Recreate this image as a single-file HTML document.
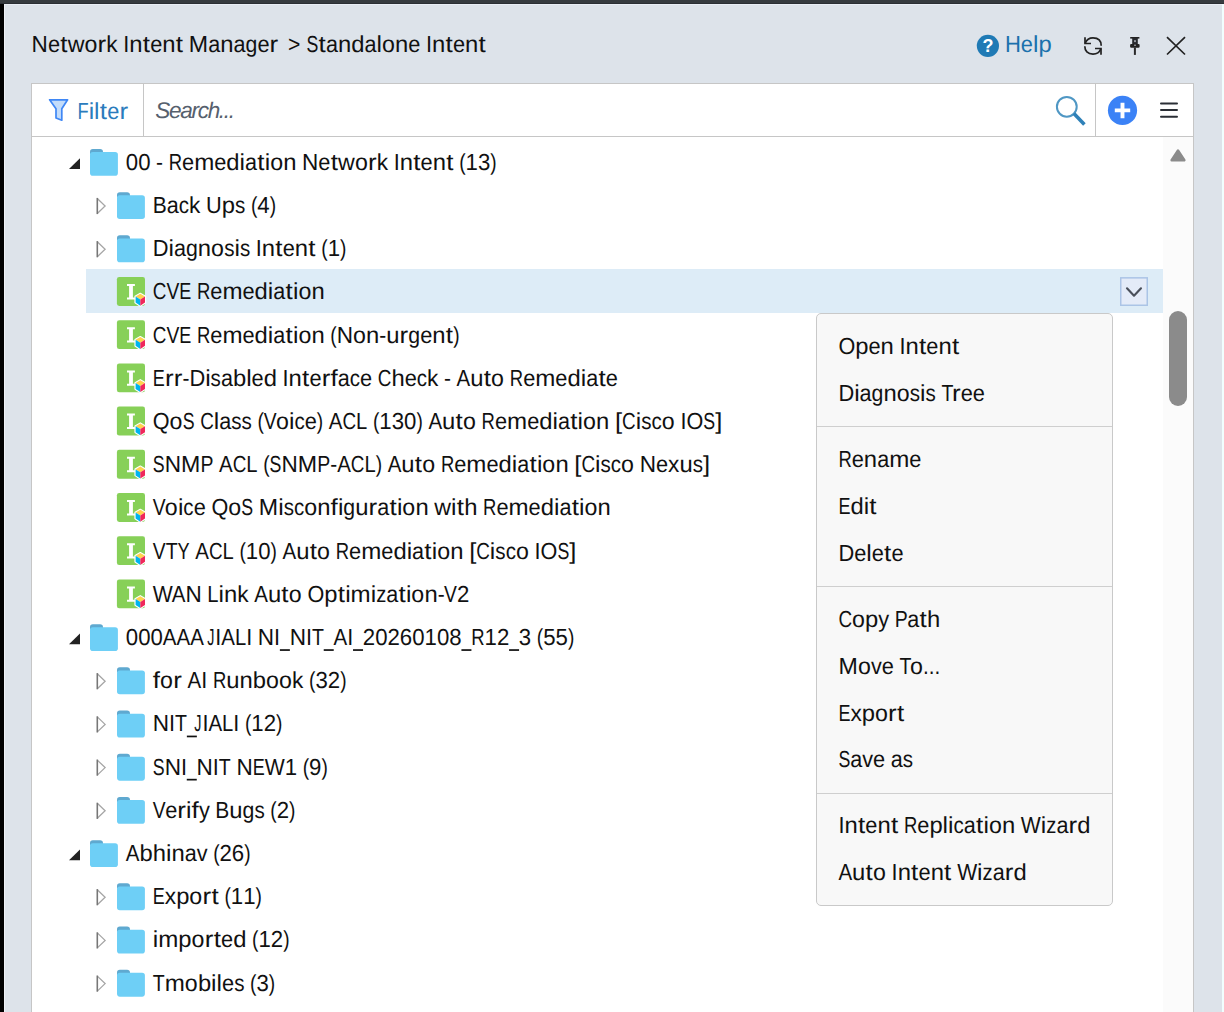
<!DOCTYPE html>
<html><head><meta charset="utf-8"><title>Network Intent Manager</title>
<style>
html,body{margin:0;padding:0;}
body{width:1224px;height:1012px;overflow:hidden;position:relative;background:#dde3ea;font-family:"Liberation Sans",sans-serif;font-size:22px;color:#111;}
.abs{position:absolute;}
.g{color:transparent;font-size:22px !important;}
.t{position:absolute;white-space:pre;line-height:43.2px;height:43.2px;font-size:22.6px;text-rendering:geometricPrecision;}
svg{position:absolute;overflow:visible;}
</style></head><body>

<div class="abs" style="left:0;top:0;width:1224px;height:3px;background:#363b3f"></div>
<div class="abs" style="left:0;top:3px;width:1224px;height:1px;background:#2b2f34"></div>
<div class="abs" style="left:4px;top:4px;width:1220px;height:1px;background:#e9eef5"></div>
<div class="abs" style="left:1222px;top:4px;width:2px;height:1008px;background:#f1fefe"></div>
<div class="abs" style="left:0;top:4px;width:4px;height:1008px;background:#000"></div>
<div class="abs" style="left:4px;top:4px;width:1px;height:1008px;background:#eef1f5"></div>
<svg style="left:976px;top:34px" width="24" height="24" viewBox="0 0 24 24"><circle cx="11.9" cy="11.8" r="11.1" fill="#1f7ab5"/><text x="11.9" y="18.2" text-anchor="middle" font-family="Liberation Sans" font-weight="bold" font-size="18" fill="#fff">?</text></svg>
<svg style="left:1084px;top:37px" width="18" height="18" viewBox="0 0 18 18" fill="none" stroke="#222" stroke-width="1.7"><path d="M1.2 6.3 C2.6 2.6 5.2 0.9 9 0.9 C14.4 0.9 17.2 4 17.2 8.7"/><path d="M16.8 11.7 C15.4 15.4 12.8 17.1 9 17.1 C3.6 17.1 0.8 14 0.8 9.3"/><path d="M1 0.2 V6.5 H7"/><path d="M17 17.8 V11.5 H11"/></svg>
<svg style="left:1130px;top:37px" width="10" height="18" viewBox="0 0 10 18"><rect x="0.2" y="0" width="9.2" height="1.6" fill="#222"/><path d="M2.2 1 H7.8 V8 H2.2 Z" fill="#26282c"/><rect x="4.2" y="3" width="1.6" height="2.2" rx="0.8" fill="#b9bec5"/><rect x="0.1" y="6.9" width="9.5" height="3.9" rx="1.2" fill="#222"/><rect x="4" y="7.6" width="2" height="1.4" rx="0.7" fill="#9a9fa6"/><rect x="3.9" y="10.5" width="2" height="7.4" fill="#2a2a2a"/></svg>
<svg style="left:1166px;top:36px" width="20" height="20" viewBox="0 0 20 20" fill="none" stroke="#222" stroke-width="1.7"><path d="M1 1.2 L19 18.5 M19 1.2 L1 18.5"/></svg>
<div class="abs" style="left:31px;top:83px;width:1161px;height:940px;background:#fff;border:1px solid #c6c6c6"></div>
<div class="abs" style="left:32px;top:136px;width:1161px;height:1px;background:#c6c6c6"></div>
<div class="abs" style="left:143px;top:84px;width:1px;height:52px;background:#c6c6c6"></div>
<div class="abs" style="left:1095px;top:84px;width:1px;height:52px;background:#c6c6c6"></div>
<svg style="left:48px;top:98px" width="22" height="24" viewBox="0 0 22 24"><path d="M1.6 1.8 H19.6 L13.8 10.8 V22.2 L8 20 V10.8 Z" fill="#c3dcfa" stroke="#3f87f5" stroke-width="1.7" stroke-linejoin="round"/></svg>
<div class="t" style="left:155.30px;top:89.00px;letter-spacing:-1.338px;color:#56606d;font-style:italic">Search...</div>
<svg style="left:1054px;top:94px" width="34" height="34" viewBox="0 0 34 34" fill="none"><circle cx="12.8" cy="12.8" r="9.9" stroke="#4f97c4" stroke-width="2"/><path d="M19.9 19.6 L30.4 30.4" stroke="#2f81b8" stroke-width="3.6" stroke-linecap="butt"/></svg>
<svg style="left:1107px;top:95px" width="32" height="32" viewBox="0 0 32 32"><circle cx="15.5" cy="15.4" r="14.6" fill="#3b82f6"/><path d="M7.8 15.4 H23.2 M15.5 7.8 V23.2" stroke="#fff" stroke-width="3.9"/></svg>
<svg style="left:1160px;top:100px" width="18" height="20" viewBox="0 0 18 20" stroke="#2b2f36" stroke-width="2" stroke-linecap="round"><path d="M1 3.5 H17 M1 10.1 H17 M1 16.7 H17"/></svg>
<div class="abs" style="left:1163px;top:137px;width:30px;height:880px;background:#fbfbfb"></div>
<svg style="left:1168px;top:147px" width="20" height="16" viewBox="0 0 20 16"><path d="M3.6 13.2 L10 3.4 L16.4 13.2 Z" fill="#8b8b8b" stroke="#8b8b8b" stroke-width="2.4" stroke-linejoin="round"/></svg>
<div class="abs" style="left:1169px;top:311px;width:18px;height:95px;border-radius:9px;background:#8b8b8b"></div>
<div class="abs" style="left:86px;top:269.15px;width:1077px;height:43.55px;background:#ddecf7"></div>
<svg style="left:1120px;top:277px" width="28" height="29" viewBox="0 0 28 29"><rect x="0.75" y="0.85" width="26.5" height="27.4" fill="#e4ebf8" stroke="#abc4e6" stroke-width="1.5"/></svg>
<svg style="left:1120px;top:277px" width="28" height="29" viewBox="0 0 28 29" fill="none" stroke="#4a4f5a" stroke-width="2.1" stroke-linecap="round" stroke-linejoin="round"><path d="M7 11.3 L14 18.7 L21 11.3"/></svg>
<svg style="left:0;top:0" width="1224" height="1012" viewBox="0 0 1224 1012"><defs><g id="fo"><path d="M0.1 6.5 V4 Q0.1 1.3 2.9 1.3 H10.2 Q13 1.3 13.1 4 V6.5 Z" fill="#5fa9d0"/><path d="M0.1 7.2 Q0.1 4.4 2.9 4.4 H25.2 Q28 4.4 28 7.2 V25.4 Q28 28.2 25.2 28.2 H2.9 Q0.1 28.2 0.1 25.4 Z" fill="#6ecff6"/></g><g id="in"><rect x="0" y="0" width="28.1" height="28.9" rx="2.3" fill="#87d058"/><path d="M10.1 7 H18 V9 H16 V20.4 H18 V22.4 H10.1 V20.4 H12.2 V9 H10.1 Z" fill="#fff"/><path d="M23.4 16.4 L28.6 19.4 V25.7 L23.4 29.1 L18.2 25.7 V19.4 Z" fill="#fff" stroke="#fff" stroke-width="1.4" stroke-linejoin="round"/><path d="M23.4 16.8 L28.1 19.6 L23.4 22.5 L18.7 19.6 Z" fill="#ffd34f"/><path d="M18.7 19.6 L23.4 22.5 V28.7 L18.7 25.6 Z" fill="#00b4ef"/><path d="M28.1 19.6 L23.4 22.5 V28.7 L28.1 25.6 Z" fill="#f0285a"/></g><path id="op" d="M-9.9 -3 V7.8 H-20.9 Z" fill="#222"/><g id="cl" fill="none"><path d="M-19.6 -6 L-11.8 1.5 L-19.6 9" stroke="#a6a6a6" stroke-width="1.3"/><path d="M-19.6 -6.6 V9.6" stroke="#777" stroke-width="1.6"/></g></defs>
<use href="#fo" x="89.90" y="147.65"/>
<use href="#op" x="89.90" y="161.30"/>
<use href="#fo" x="116.90" y="190.85"/>
<use href="#cl" x="116.90" y="204.50"/>
<use href="#fo" x="116.90" y="234.05"/>
<use href="#cl" x="116.90" y="247.70"/>
<use href="#in" x="116.90" y="277.00"/>
<use href="#in" x="116.90" y="320.20"/>
<use href="#in" x="116.90" y="363.40"/>
<use href="#in" x="116.90" y="406.60"/>
<use href="#in" x="116.90" y="449.80"/>
<use href="#in" x="116.90" y="493.00"/>
<use href="#in" x="116.90" y="536.20"/>
<use href="#in" x="116.90" y="579.40"/>
<use href="#fo" x="89.90" y="622.85"/>
<use href="#op" x="89.90" y="636.50"/>
<use href="#fo" x="116.90" y="666.05"/>
<use href="#cl" x="116.90" y="679.70"/>
<use href="#fo" x="116.90" y="709.25"/>
<use href="#cl" x="116.90" y="722.90"/>
<use href="#fo" x="116.90" y="752.45"/>
<use href="#cl" x="116.90" y="766.10"/>
<use href="#fo" x="116.90" y="795.65"/>
<use href="#cl" x="116.90" y="809.30"/>
<use href="#fo" x="89.90" y="838.85"/>
<use href="#op" x="89.90" y="852.50"/>
<use href="#fo" x="116.90" y="882.05"/>
<use href="#cl" x="116.90" y="895.70"/>
<use href="#fo" x="116.90" y="925.25"/>
<use href="#cl" x="116.90" y="938.90"/>
<use href="#fo" x="116.90" y="968.45"/>
<use href="#cl" x="116.90" y="982.10"/>
</svg>
<div class="abs" style="left:816.2px;top:312.7px;width:294.6px;height:591.8px;background:#f8f8f8;border:1px solid #c9c9c9;border-radius:5px"></div>
<div class="abs" style="left:817px;top:426px;width:295px;height:1px;background:#cfcfcf"></div>
<div class="abs" style="left:817px;top:586px;width:295px;height:1px;background:#cfcfcf"></div>
<div class="abs" style="left:817px;top:793px;width:295px;height:1px;background:#cfcfcf"></div>
<svg style="left:0;top:0" width="1224" height="1012" viewBox="0 0 1224 1012" font-family="Liberation Sans, sans-serif" font-size="23.2" text-rendering="geometricPrecision" style="white-space:pre">
<g fill="#111"><text transform="matrix(0.972 0 0 1 31.60 52.00)">N</text><text transform="matrix(0.939 0 0 1 47.88 52.00)">e</text><text transform="matrix(1.120 0 0 1 60.21 52.00)">t</text><text x="67.63" y="52.00">w</text><text x="84.43" y="52.00">o</text><text transform="matrix(1.120 0 0 1 97.56 52.00)">r</text><text transform="matrix(0.977 0 0 1 106.29 52.00)">k</text><text transform="matrix(0.934 0 0 1 123.24 52.00)">I</text><text transform="matrix(1.027 0 0 1 129.26 52.00)">n</text><text transform="matrix(1.120 0 0 1 142.72 52.00)">t</text><text transform="matrix(0.939 0 0 1 150.15 52.00)">e</text><text transform="matrix(1.027 0 0 1 162.27 52.00)">n</text><text transform="matrix(1.120 0 0 1 175.73 52.00)">t</text><text x="188.76" y="52.00">M</text><text transform="matrix(0.931 0 0 1 208.26 52.00)">a</text><text transform="matrix(1.027 0 0 1 220.27 52.00)">n</text><text transform="matrix(0.931 0 0 1 233.53 52.00)">a</text><text transform="matrix(0.917 0 0 1 245.54 52.00)">g</text><text transform="matrix(0.939 0 0 1 257.38 52.00)">e</text><text transform="matrix(1.120 0 0 1 269.58 52.00)">r</text></g>
<g fill="#111"><text transform="matrix(0.912 0 0 1 288.00 52.00)">&gt;</text></g>
<g fill="#111"><text transform="matrix(0.766 0 0 1 306.50 52.00)">S</text><text transform="matrix(1.120 0 0 1 318.56 52.00)">t</text><text transform="matrix(0.931 0 0 1 325.98 52.00)">a</text><text transform="matrix(1.027 0 0 1 337.99 52.00)">n</text><text transform="matrix(1.026 0 0 1 351.25 52.00)">d</text><text transform="matrix(0.931 0 0 1 364.49 52.00)">a</text><text transform="matrix(1.060 0 0 1 376.50 52.00)">l</text><text x="381.96" y="52.00">o</text><text transform="matrix(1.027 0 0 1 395.01 52.00)">n</text><text transform="matrix(0.939 0 0 1 408.27 52.00)">e</text><text transform="matrix(0.934 0 0 1 426.00 52.00)">I</text><text transform="matrix(1.027 0 0 1 432.02 52.00)">n</text><text transform="matrix(1.120 0 0 1 445.48 52.00)">t</text><text transform="matrix(0.939 0 0 1 452.90 52.00)">e</text><text transform="matrix(1.027 0 0 1 465.02 52.00)">n</text><text transform="matrix(1.120 0 0 1 478.48 52.00)">t</text></g>
<g fill="#1b71ad"><text transform="matrix(0.951 0 0 1 1004.90 51.70)">H</text><text transform="matrix(0.939 0 0 1 1020.84 51.70)">e</text><text transform="matrix(1.060 0 0 1 1032.95 51.70)">l</text><text transform="matrix(1.026 0 0 1 1038.42 51.70)">p</text></g>
<g fill="#2b7cbd"><text transform="matrix(0.787 0 0 1 77.50 118.50)">F</text><text transform="matrix(1.060 0 0 1 88.65 118.50)">i</text><text transform="matrix(1.060 0 0 1 94.11 118.50)">l</text><text transform="matrix(1.120 0 0 1 99.78 118.50)">t</text><text transform="matrix(0.939 0 0 1 107.20 118.50)">e</text><text transform="matrix(1.120 0 0 1 119.40 118.50)">r</text></g>
<g fill="#111"><text transform="matrix(0.957 0 0 1 125.80 169.80)">0</text><text transform="matrix(0.957 0 0 1 138.15 169.80)">0</text><text transform="matrix(0.900 0 0 1 156.11 169.80)">-</text><text transform="matrix(0.797 0 0 1 168.67 169.80)">R</text><text transform="matrix(0.939 0 0 1 182.03 169.80)">e</text><text transform="matrix(1.040 0 0 1 194.14 169.80)">m</text><text transform="matrix(0.939 0 0 1 214.24 169.80)">e</text><text transform="matrix(1.026 0 0 1 226.35 169.80)">d</text><text transform="matrix(1.060 0 0 1 239.59 169.80)">i</text><text transform="matrix(0.931 0 0 1 245.05 169.80)">a</text><text transform="matrix(1.120 0 0 1 257.27 169.80)">t</text><text transform="matrix(1.060 0 0 1 264.69 169.80)">i</text><text x="270.16" y="169.80">o</text><text transform="matrix(1.027 0 0 1 283.20 169.80)">n</text><text transform="matrix(0.972 0 0 1 302.07 169.80)">N</text><text transform="matrix(0.939 0 0 1 318.35 169.80)">e</text><text transform="matrix(1.120 0 0 1 330.68 169.80)">t</text><text x="338.10" y="169.80">w</text><text x="354.90" y="169.80">o</text><text transform="matrix(1.120 0 0 1 368.03 169.80)">r</text><text transform="matrix(0.977 0 0 1 376.76 169.80)">k</text><text transform="matrix(0.934 0 0 1 393.71 169.80)">I</text><text transform="matrix(1.027 0 0 1 399.73 169.80)">n</text><text transform="matrix(1.120 0 0 1 413.19 169.80)">t</text><text transform="matrix(0.939 0 0 1 420.62 169.80)">e</text><text transform="matrix(1.027 0 0 1 432.74 169.80)">n</text><text transform="matrix(1.120 0 0 1 446.20 169.80)">t</text><text transform="matrix(0.827 0 0 1 459.23 169.80)">(</text><text transform="matrix(0.957 0 0 1 465.62 169.80)">1</text><text transform="matrix(0.957 0 0 1 477.97 169.80)">3</text><text transform="matrix(0.827 0 0 1 490.32 169.80)">)</text></g>
<g fill="#111"><text transform="matrix(0.904 0 0 1 152.80 213.00)">B</text><text transform="matrix(0.931 0 0 1 166.80 213.00)">a</text><text transform="matrix(0.886 0 0 1 178.81 213.00)">c</text><text transform="matrix(0.977 0 0 1 189.09 213.00)">k</text><text transform="matrix(0.939 0 0 1 206.04 213.00)">U</text><text transform="matrix(1.026 0 0 1 221.77 213.00)">p</text><text transform="matrix(0.888 0 0 1 235.00 213.00)">s</text><text transform="matrix(0.827 0 0 1 250.92 213.00)">(</text><text transform="matrix(0.957 0 0 1 257.31 213.00)">4</text><text transform="matrix(0.827 0 0 1 269.66 213.00)">)</text></g>
<g fill="#111"><text transform="matrix(0.940 0 0 1 152.80 256.20)">D</text><text transform="matrix(1.060 0 0 1 168.55 256.20)">i</text><text transform="matrix(0.931 0 0 1 174.01 256.20)">a</text><text transform="matrix(0.917 0 0 1 186.02 256.20)">g</text><text transform="matrix(1.027 0 0 1 197.86 256.20)">n</text><text x="211.11" y="256.20">o</text><text transform="matrix(0.888 0 0 1 224.16 256.20)">s</text><text transform="matrix(1.060 0 0 1 234.46 256.20)">i</text><text transform="matrix(0.888 0 0 1 239.93 256.20)">s</text><text transform="matrix(0.934 0 0 1 255.84 256.20)">I</text><text transform="matrix(1.027 0 0 1 261.87 256.20)">n</text><text transform="matrix(1.120 0 0 1 275.33 256.20)">t</text><text transform="matrix(0.939 0 0 1 282.75 256.20)">e</text><text transform="matrix(1.027 0 0 1 294.87 256.20)">n</text><text transform="matrix(1.120 0 0 1 308.33 256.20)">t</text><text transform="matrix(0.827 0 0 1 321.36 256.20)">(</text><text transform="matrix(0.957 0 0 1 327.75 256.20)">1</text><text transform="matrix(0.827 0 0 1 340.10 256.20)">)</text></g>
<g fill="#111"><text transform="matrix(0.813 0 0 1 152.80 299.40)">C</text><text transform="matrix(0.831 0 0 1 166.43 299.40)">V</text><text transform="matrix(0.776 0 0 1 179.28 299.40)">E</text><text transform="matrix(0.797 0 0 1 196.91 299.40)">R</text><text transform="matrix(0.939 0 0 1 210.26 299.40)">e</text><text transform="matrix(1.040 0 0 1 222.38 299.40)">m</text><text transform="matrix(0.939 0 0 1 242.47 299.40)">e</text><text transform="matrix(1.026 0 0 1 254.59 299.40)">d</text><text transform="matrix(1.060 0 0 1 267.82 299.40)">i</text><text transform="matrix(0.931 0 0 1 273.29 299.40)">a</text><text transform="matrix(1.120 0 0 1 285.50 299.40)">t</text><text transform="matrix(1.060 0 0 1 292.93 299.40)">i</text><text x="298.39" y="299.40">o</text><text transform="matrix(1.027 0 0 1 311.44 299.40)">n</text></g>
<g fill="#111"><text transform="matrix(0.813 0 0 1 152.80 342.60)">C</text><text transform="matrix(0.831 0 0 1 166.43 342.60)">V</text><text transform="matrix(0.776 0 0 1 179.28 342.60)">E</text><text transform="matrix(0.797 0 0 1 196.91 342.60)">R</text><text transform="matrix(0.939 0 0 1 210.26 342.60)">e</text><text transform="matrix(1.040 0 0 1 222.38 342.60)">m</text><text transform="matrix(0.939 0 0 1 242.47 342.60)">e</text><text transform="matrix(1.026 0 0 1 254.59 342.60)">d</text><text transform="matrix(1.060 0 0 1 267.82 342.60)">i</text><text transform="matrix(0.931 0 0 1 273.29 342.60)">a</text><text transform="matrix(1.120 0 0 1 285.50 342.60)">t</text><text transform="matrix(1.060 0 0 1 292.93 342.60)">i</text><text x="298.39" y="342.60">o</text><text transform="matrix(1.027 0 0 1 311.44 342.60)">n</text><text transform="matrix(0.827 0 0 1 330.30 342.60)">(</text><text transform="matrix(0.972 0 0 1 336.70 342.60)">N</text><text x="352.98" y="342.60">o</text><text transform="matrix(1.027 0 0 1 366.03 342.60)">n</text><text transform="matrix(0.900 0 0 1 379.28 342.60)">-</text><text transform="matrix(1.027 0 0 1 386.23 342.60)">u</text><text transform="matrix(1.120 0 0 1 399.57 342.60)">r</text><text transform="matrix(0.917 0 0 1 408.31 342.60)">g</text><text transform="matrix(0.939 0 0 1 420.14 342.60)">e</text><text transform="matrix(1.027 0 0 1 432.26 342.60)">n</text><text transform="matrix(1.120 0 0 1 445.72 342.60)">t</text><text transform="matrix(0.827 0 0 1 453.14 342.60)">)</text></g>
<g fill="#111"><text transform="matrix(0.776 0 0 1 152.80 385.80)">E</text><text transform="matrix(1.120 0 0 1 164.90 385.80)">r</text><text transform="matrix(1.120 0 0 1 173.71 385.80)">r</text><text transform="matrix(0.900 0 0 1 182.45 385.80)">-</text><text transform="matrix(0.940 0 0 1 189.40 385.80)">D</text><text transform="matrix(1.060 0 0 1 205.14 385.80)">i</text><text transform="matrix(0.888 0 0 1 210.61 385.80)">s</text><text transform="matrix(0.931 0 0 1 220.91 385.80)">a</text><text transform="matrix(1.026 0 0 1 232.92 385.80)">b</text><text transform="matrix(1.060 0 0 1 246.16 385.80)">l</text><text transform="matrix(0.939 0 0 1 251.62 385.80)">e</text><text transform="matrix(1.026 0 0 1 263.74 385.80)">d</text><text transform="matrix(0.934 0 0 1 282.59 385.80)">I</text><text transform="matrix(1.027 0 0 1 288.61 385.80)">n</text><text transform="matrix(1.120 0 0 1 302.07 385.80)">t</text><text transform="matrix(0.939 0 0 1 309.49 385.80)">e</text><text transform="matrix(1.120 0 0 1 321.70 385.80)">r</text><text transform="matrix(1.120 0 0 1 330.48 385.80)">f</text><text transform="matrix(0.931 0 0 1 337.75 385.80)">a</text><text transform="matrix(0.886 0 0 1 349.76 385.80)">c</text><text transform="matrix(0.939 0 0 1 360.05 385.80)">e</text><text transform="matrix(0.813 0 0 1 377.78 385.80)">C</text><text transform="matrix(1.027 0 0 1 391.40 385.80)">h</text><text transform="matrix(0.939 0 0 1 404.66 385.80)">e</text><text transform="matrix(0.886 0 0 1 416.78 385.80)">c</text><text transform="matrix(0.977 0 0 1 427.06 385.80)">k</text><text transform="matrix(0.900 0 0 1 444.01 385.80)">-</text><text transform="matrix(0.883 0 0 1 456.57 385.80)">A</text><text transform="matrix(1.027 0 0 1 470.24 385.80)">u</text><text transform="matrix(1.120 0 0 1 483.70 385.80)">t</text><text x="491.12" y="385.80">o</text><text transform="matrix(0.797 0 0 1 509.78 385.80)">R</text><text transform="matrix(0.939 0 0 1 523.13 385.80)">e</text><text transform="matrix(1.040 0 0 1 535.25 385.80)">m</text><text transform="matrix(0.939 0 0 1 555.34 385.80)">e</text><text transform="matrix(1.026 0 0 1 567.46 385.80)">d</text><text transform="matrix(1.060 0 0 1 580.70 385.80)">i</text><text transform="matrix(0.931 0 0 1 586.16 385.80)">a</text><text transform="matrix(1.120 0 0 1 598.38 385.80)">t</text><text transform="matrix(0.939 0 0 1 605.80 385.80)">e</text></g>
<g fill="#111"><text transform="matrix(0.932 0 0 1 152.80 429.00)">Q</text><text x="169.62" y="429.00">o</text><text transform="matrix(0.766 0 0 1 182.67 429.00)">S</text><text transform="matrix(0.813 0 0 1 200.13 429.00)">C</text><text transform="matrix(1.060 0 0 1 213.76 429.00)">l</text><text transform="matrix(0.931 0 0 1 219.22 429.00)">a</text><text transform="matrix(0.888 0 0 1 231.24 429.00)">s</text><text transform="matrix(0.888 0 0 1 241.54 429.00)">s</text><text transform="matrix(0.827 0 0 1 257.46 429.00)">(</text><text transform="matrix(0.831 0 0 1 263.85 429.00)">V</text><text x="275.90" y="429.00">o</text><text transform="matrix(1.060 0 0 1 288.95 429.00)">i</text><text transform="matrix(0.886 0 0 1 294.41 429.00)">c</text><text transform="matrix(0.939 0 0 1 304.70 429.00)">e</text><text transform="matrix(0.827 0 0 1 316.82 429.00)">)</text><text transform="matrix(0.883 0 0 1 328.82 429.00)">A</text><text transform="matrix(0.813 0 0 1 342.49 429.00)">C</text><text transform="matrix(0.869 0 0 1 356.11 429.00)">L</text><text transform="matrix(0.827 0 0 1 372.94 429.00)">(</text><text transform="matrix(0.957 0 0 1 379.33 429.00)">1</text><text transform="matrix(0.957 0 0 1 391.68 429.00)">3</text><text transform="matrix(0.957 0 0 1 404.03 429.00)">0</text><text transform="matrix(0.827 0 0 1 416.38 429.00)">)</text><text transform="matrix(0.883 0 0 1 428.38 429.00)">A</text><text transform="matrix(1.027 0 0 1 442.05 429.00)">u</text><text transform="matrix(1.120 0 0 1 455.51 429.00)">t</text><text x="462.93" y="429.00">o</text><text transform="matrix(0.797 0 0 1 481.59 429.00)">R</text><text transform="matrix(0.939 0 0 1 494.94 429.00)">e</text><text transform="matrix(1.040 0 0 1 507.06 429.00)">m</text><text transform="matrix(0.939 0 0 1 527.15 429.00)">e</text><text transform="matrix(1.026 0 0 1 539.27 429.00)">d</text><text transform="matrix(1.060 0 0 1 552.51 429.00)">i</text><text transform="matrix(0.931 0 0 1 557.97 429.00)">a</text><text transform="matrix(1.120 0 0 1 570.19 429.00)">t</text><text transform="matrix(1.060 0 0 1 577.61 429.00)">i</text><text x="583.07" y="429.00">o</text><text transform="matrix(1.027 0 0 1 596.12 429.00)">n</text><text transform="matrix(1.103 0 0 1 614.99 429.00)">[</text><text transform="matrix(0.813 0 0 1 622.10 429.00)">C</text><text transform="matrix(1.060 0 0 1 635.72 429.00)">i</text><text transform="matrix(0.888 0 0 1 641.19 429.00)">s</text><text transform="matrix(0.886 0 0 1 651.49 429.00)">c</text><text x="661.77" y="429.00">o</text><text transform="matrix(0.934 0 0 1 680.43 429.00)">I</text><text transform="matrix(0.932 0 0 1 686.45 429.00)">O</text><text transform="matrix(0.766 0 0 1 703.27 429.00)">S</text><text transform="matrix(1.103 0 0 1 715.13 429.00)">]</text></g>
<g fill="#111"><text transform="matrix(0.766 0 0 1 152.80 472.20)">S</text><text transform="matrix(0.972 0 0 1 164.65 472.20)">N</text><text x="180.94" y="472.20">M</text><text transform="matrix(0.840 0 0 1 200.44 472.20)">P</text><text transform="matrix(0.883 0 0 1 219.06 472.20)">A</text><text transform="matrix(0.813 0 0 1 232.72 472.20)">C</text><text transform="matrix(0.869 0 0 1 246.35 472.20)">L</text><text transform="matrix(0.827 0 0 1 263.17 472.20)">(</text><text transform="matrix(0.766 0 0 1 269.56 472.20)">S</text><text transform="matrix(0.972 0 0 1 281.42 472.20)">N</text><text x="297.70" y="472.20">M</text><text transform="matrix(0.840 0 0 1 317.20 472.20)">P</text><text transform="matrix(0.900 0 0 1 330.21 472.20)">-</text><text transform="matrix(0.883 0 0 1 337.16 472.20)">A</text><text transform="matrix(0.813 0 0 1 350.83 472.20)">C</text><text transform="matrix(0.869 0 0 1 364.45 472.20)">L</text><text transform="matrix(0.827 0 0 1 375.67 472.20)">)</text><text transform="matrix(0.883 0 0 1 387.67 472.20)">A</text><text transform="matrix(1.027 0 0 1 401.34 472.20)">u</text><text transform="matrix(1.120 0 0 1 414.80 472.20)">t</text><text x="422.22" y="472.20">o</text><text transform="matrix(0.797 0 0 1 440.88 472.20)">R</text><text transform="matrix(0.939 0 0 1 454.23 472.20)">e</text><text transform="matrix(1.040 0 0 1 466.35 472.20)">m</text><text transform="matrix(0.939 0 0 1 486.44 472.20)">e</text><text transform="matrix(1.026 0 0 1 498.56 472.20)">d</text><text transform="matrix(1.060 0 0 1 511.79 472.20)">i</text><text transform="matrix(0.931 0 0 1 517.26 472.20)">a</text><text transform="matrix(1.120 0 0 1 529.47 472.20)">t</text><text transform="matrix(1.060 0 0 1 536.90 472.20)">i</text><text x="542.36" y="472.20">o</text><text transform="matrix(1.027 0 0 1 555.41 472.20)">n</text><text transform="matrix(1.103 0 0 1 574.27 472.20)">[</text><text transform="matrix(0.813 0 0 1 581.38 472.20)">C</text><text transform="matrix(1.060 0 0 1 595.01 472.20)">i</text><text transform="matrix(0.888 0 0 1 600.47 472.20)">s</text><text transform="matrix(0.886 0 0 1 610.78 472.20)">c</text><text x="621.06" y="472.20">o</text><text transform="matrix(0.972 0 0 1 639.72 472.20)">N</text><text transform="matrix(0.939 0 0 1 656.00 472.20)">e</text><text transform="matrix(0.976 0 0 1 668.12 472.20)">x</text><text transform="matrix(1.027 0 0 1 679.44 472.20)">u</text><text transform="matrix(0.888 0 0 1 692.69 472.20)">s</text><text transform="matrix(1.103 0 0 1 703.00 472.20)">]</text></g>
<g fill="#111"><text transform="matrix(0.831 0 0 1 152.80 515.40)">V</text><text x="164.86" y="515.40">o</text><text transform="matrix(1.060 0 0 1 177.90 515.40)">i</text><text transform="matrix(0.886 0 0 1 183.37 515.40)">c</text><text transform="matrix(0.939 0 0 1 193.65 515.40)">e</text><text transform="matrix(0.932 0 0 1 211.38 515.40)">Q</text><text x="228.20" y="515.40">o</text><text transform="matrix(0.766 0 0 1 241.25 515.40)">S</text><text x="258.71" y="515.40">M</text><text transform="matrix(1.060 0 0 1 278.21 515.40)">i</text><text transform="matrix(0.888 0 0 1 283.68 515.40)">s</text><text transform="matrix(0.886 0 0 1 293.98 515.40)">c</text><text x="304.27" y="515.40">o</text><text transform="matrix(1.027 0 0 1 317.31 515.40)">n</text><text transform="matrix(1.120 0 0 1 330.62 515.40)">f</text><text transform="matrix(1.060 0 0 1 337.89 515.40)">i</text><text transform="matrix(0.917 0 0 1 343.35 515.40)">g</text><text transform="matrix(1.027 0 0 1 355.19 515.40)">u</text><text transform="matrix(1.120 0 0 1 368.53 515.40)">r</text><text transform="matrix(0.931 0 0 1 377.26 515.40)">a</text><text transform="matrix(1.120 0 0 1 389.48 515.40)">t</text><text transform="matrix(1.060 0 0 1 396.90 515.40)">i</text><text x="402.36" y="515.40">o</text><text transform="matrix(1.027 0 0 1 415.41 515.40)">n</text><text x="434.28" y="515.40">w</text><text transform="matrix(1.060 0 0 1 451.08 515.40)">i</text><text transform="matrix(1.120 0 0 1 456.74 515.40)">t</text><text transform="matrix(1.027 0 0 1 464.17 515.40)">h</text><text transform="matrix(0.797 0 0 1 483.03 515.40)">R</text><text transform="matrix(0.939 0 0 1 496.39 515.40)">e</text><text transform="matrix(1.040 0 0 1 508.51 515.40)">m</text><text transform="matrix(0.939 0 0 1 528.60 515.40)">e</text><text transform="matrix(1.026 0 0 1 540.72 515.40)">d</text><text transform="matrix(1.060 0 0 1 553.95 515.40)">i</text><text transform="matrix(0.931 0 0 1 559.42 515.40)">a</text><text transform="matrix(1.120 0 0 1 571.63 515.40)">t</text><text transform="matrix(1.060 0 0 1 579.05 515.40)">i</text><text x="584.52" y="515.40">o</text><text transform="matrix(1.027 0 0 1 597.56 515.40)">n</text></g>
<g fill="#111"><text transform="matrix(0.831 0 0 1 152.80 558.60)">V</text><text transform="matrix(0.843 0 0 1 165.66 558.60)">T</text><text transform="matrix(0.782 0 0 1 177.61 558.60)">Y</text><text transform="matrix(0.883 0 0 1 195.31 558.60)">A</text><text transform="matrix(0.813 0 0 1 208.98 558.60)">C</text><text transform="matrix(0.869 0 0 1 222.61 558.60)">L</text><text transform="matrix(0.827 0 0 1 239.43 558.60)">(</text><text transform="matrix(0.957 0 0 1 245.82 558.60)">1</text><text transform="matrix(0.957 0 0 1 258.17 558.60)">0</text><text transform="matrix(0.827 0 0 1 270.52 558.60)">)</text><text transform="matrix(0.883 0 0 1 282.53 558.60)">A</text><text transform="matrix(1.027 0 0 1 296.20 558.60)">u</text><text transform="matrix(1.120 0 0 1 309.66 558.60)">t</text><text x="317.08" y="558.60">o</text><text transform="matrix(0.797 0 0 1 335.74 558.60)">R</text><text transform="matrix(0.939 0 0 1 349.09 558.60)">e</text><text transform="matrix(1.040 0 0 1 361.21 558.60)">m</text><text transform="matrix(0.939 0 0 1 381.30 558.60)">e</text><text transform="matrix(1.026 0 0 1 393.42 558.60)">d</text><text transform="matrix(1.060 0 0 1 406.65 558.60)">i</text><text transform="matrix(0.931 0 0 1 412.12 558.60)">a</text><text transform="matrix(1.120 0 0 1 424.33 558.60)">t</text><text transform="matrix(1.060 0 0 1 431.75 558.60)">i</text><text x="437.22" y="558.60">o</text><text transform="matrix(1.027 0 0 1 450.26 558.60)">n</text><text transform="matrix(1.103 0 0 1 469.13 558.60)">[</text><text transform="matrix(0.813 0 0 1 476.24 558.60)">C</text><text transform="matrix(1.060 0 0 1 489.87 558.60)">i</text><text transform="matrix(0.888 0 0 1 495.33 558.60)">s</text><text transform="matrix(0.886 0 0 1 505.64 558.60)">c</text><text x="515.92" y="558.60">o</text><text transform="matrix(0.934 0 0 1 534.58 558.60)">I</text><text transform="matrix(0.932 0 0 1 540.60 558.60)">O</text><text transform="matrix(0.766 0 0 1 557.42 558.60)">S</text><text transform="matrix(1.103 0 0 1 569.27 558.60)">]</text></g>
<g fill="#111"><text transform="matrix(0.913 0 0 1 152.80 601.80)">W</text><text transform="matrix(0.883 0 0 1 171.80 601.80)">A</text><text transform="matrix(0.972 0 0 1 185.47 601.80)">N</text><text transform="matrix(0.869 0 0 1 207.36 601.80)">L</text><text transform="matrix(1.060 0 0 1 218.57 601.80)">i</text><text transform="matrix(1.027 0 0 1 224.04 601.80)">n</text><text transform="matrix(0.977 0 0 1 237.29 601.80)">k</text><text transform="matrix(0.883 0 0 1 254.24 601.80)">A</text><text transform="matrix(1.027 0 0 1 267.91 601.80)">u</text><text transform="matrix(1.120 0 0 1 281.37 601.80)">t</text><text x="288.79" y="601.80">o</text><text transform="matrix(0.932 0 0 1 307.45 601.80)">O</text><text transform="matrix(1.026 0 0 1 324.27 601.80)">p</text><text transform="matrix(1.120 0 0 1 337.71 601.80)">t</text><text transform="matrix(1.060 0 0 1 345.13 601.80)">i</text><text transform="matrix(1.040 0 0 1 350.60 601.80)">m</text><text transform="matrix(1.060 0 0 1 370.69 601.80)">i</text><text transform="matrix(0.871 0 0 1 376.15 601.80)">z</text><text transform="matrix(0.931 0 0 1 386.26 601.80)">a</text><text transform="matrix(1.120 0 0 1 398.47 601.80)">t</text><text transform="matrix(1.060 0 0 1 405.90 601.80)">i</text><text x="411.36" y="601.80">o</text><text transform="matrix(1.027 0 0 1 424.41 601.80)">n</text><text transform="matrix(0.900 0 0 1 437.66 601.80)">-</text><text transform="matrix(0.831 0 0 1 444.11 601.80)">V</text><text transform="matrix(0.957 0 0 1 456.97 601.80)">2</text></g>
<g fill="#111"><text transform="matrix(0.957 0 0 1 125.80 645.00)">0</text><text transform="matrix(0.957 0 0 1 138.15 645.00)">0</text><text transform="matrix(0.957 0 0 1 150.50 645.00)">0</text><text transform="matrix(0.883 0 0 1 162.85 645.00)">A</text><text transform="matrix(0.883 0 0 1 176.52 645.00)">A</text><text transform="matrix(0.883 0 0 1 190.19 645.00)">A</text><text transform="matrix(0.620 0 0 1 207.17 645.00)">J</text><text transform="matrix(0.934 0 0 1 215.24 645.00)">I</text><text transform="matrix(0.883 0 0 1 221.26 645.00)">A</text><text transform="matrix(0.869 0 0 1 234.93 645.00)">L</text><text transform="matrix(0.934 0 0 1 246.14 645.00)">I</text><text transform="matrix(0.972 0 0 1 257.77 645.00)">N</text><text transform="matrix(0.934 0 0 1 274.06 645.00)">I</text><rect x="279.88" y="649.20" width="10.00" height="1.7"/><text transform="matrix(0.972 0 0 1 289.68 645.00)">N</text><text transform="matrix(0.934 0 0 1 305.96 645.00)">I</text><text transform="matrix(0.843 0 0 1 311.98 645.00)">T</text><rect x="323.73" y="649.20" width="10.00" height="1.7"/><text transform="matrix(0.883 0 0 1 333.53 645.00)">A</text><text transform="matrix(0.934 0 0 1 347.20 645.00)">I</text><rect x="353.02" y="649.20" width="10.00" height="1.7"/><text transform="matrix(0.957 0 0 1 362.82 645.00)">2</text><text transform="matrix(0.957 0 0 1 375.17 645.00)">0</text><text transform="matrix(0.957 0 0 1 387.52 645.00)">2</text><text transform="matrix(0.957 0 0 1 399.87 645.00)">6</text><text transform="matrix(0.957 0 0 1 412.22 645.00)">0</text><text transform="matrix(0.957 0 0 1 424.57 645.00)">1</text><text transform="matrix(0.957 0 0 1 436.92 645.00)">0</text><text transform="matrix(0.957 0 0 1 449.27 645.00)">8</text><rect x="461.42" y="649.20" width="10.00" height="1.7"/><text transform="matrix(0.797 0 0 1 471.22 645.00)">R</text><text transform="matrix(0.957 0 0 1 484.57 645.00)">1</text><text transform="matrix(0.957 0 0 1 496.92 645.00)">2</text><rect x="509.07" y="649.20" width="10.00" height="1.7"/><text transform="matrix(0.957 0 0 1 518.87 645.00)">3</text><text transform="matrix(0.827 0 0 1 536.83 645.00)">(</text><text transform="matrix(0.957 0 0 1 543.22 645.00)">5</text><text transform="matrix(0.957 0 0 1 555.57 645.00)">5</text><text transform="matrix(0.827 0 0 1 567.92 645.00)">)</text></g>
<g fill="#111"><text transform="matrix(1.120 0 0 1 152.85 688.20)">f</text><text x="160.12" y="688.20">o</text><text transform="matrix(1.120 0 0 1 173.25 688.20)">r</text><text transform="matrix(0.883 0 0 1 187.59 688.20)">A</text><text transform="matrix(0.934 0 0 1 201.26 688.20)">I</text><text transform="matrix(0.797 0 0 1 212.90 688.20)">R</text><text transform="matrix(1.027 0 0 1 226.25 688.20)">u</text><text transform="matrix(1.027 0 0 1 239.51 688.20)">n</text><text transform="matrix(1.026 0 0 1 252.76 688.20)">b</text><text x="266.00" y="688.20">o</text><text x="279.05" y="688.20">o</text><text transform="matrix(0.977 0 0 1 292.09 688.20)">k</text><text transform="matrix(0.827 0 0 1 309.04 688.20)">(</text><text transform="matrix(0.957 0 0 1 315.43 688.20)">3</text><text transform="matrix(0.957 0 0 1 327.78 688.20)">2</text><text transform="matrix(0.827 0 0 1 340.13 688.20)">)</text></g>
<g fill="#111"><text transform="matrix(0.972 0 0 1 152.80 731.40)">N</text><text transform="matrix(0.934 0 0 1 169.08 731.40)">I</text><text transform="matrix(0.843 0 0 1 175.11 731.40)">T</text><rect x="186.86" y="735.60" width="10.00" height="1.7"/><text transform="matrix(0.620 0 0 1 194.35 731.40)">J</text><text transform="matrix(0.934 0 0 1 202.42 731.40)">I</text><text transform="matrix(0.883 0 0 1 208.45 731.40)">A</text><text transform="matrix(0.869 0 0 1 222.11 731.40)">L</text><text transform="matrix(0.934 0 0 1 233.33 731.40)">I</text><text transform="matrix(0.827 0 0 1 244.96 731.40)">(</text><text transform="matrix(0.957 0 0 1 251.35 731.40)">1</text><text transform="matrix(0.957 0 0 1 263.70 731.40)">2</text><text transform="matrix(0.827 0 0 1 276.05 731.40)">)</text></g>
<g fill="#111"><text transform="matrix(0.766 0 0 1 152.80 774.60)">S</text><text transform="matrix(0.972 0 0 1 164.65 774.60)">N</text><text transform="matrix(0.934 0 0 1 180.94 774.60)">I</text><rect x="186.76" y="778.80" width="10.00" height="1.7"/><text transform="matrix(0.972 0 0 1 196.56 774.60)">N</text><text transform="matrix(0.934 0 0 1 212.84 774.60)">I</text><text transform="matrix(0.843 0 0 1 218.87 774.60)">T</text><text transform="matrix(0.972 0 0 1 236.43 774.60)">N</text><text transform="matrix(0.776 0 0 1 252.71 774.60)">E</text><text transform="matrix(0.913 0 0 1 264.72 774.60)">W</text><text transform="matrix(0.957 0 0 1 284.72 774.60)">1</text><text transform="matrix(0.827 0 0 1 302.68 774.60)">(</text><text transform="matrix(0.957 0 0 1 309.07 774.60)">9</text><text transform="matrix(0.827 0 0 1 321.42 774.60)">)</text></g>
<g fill="#111"><text transform="matrix(0.831 0 0 1 152.80 817.80)">V</text><text transform="matrix(0.939 0 0 1 165.16 817.80)">e</text><text transform="matrix(1.120 0 0 1 177.36 817.80)">r</text><text transform="matrix(1.060 0 0 1 186.09 817.80)">i</text><text transform="matrix(1.120 0 0 1 191.61 817.80)">f</text><text transform="matrix(0.938 0 0 1 198.88 817.80)">y</text><text transform="matrix(0.904 0 0 1 215.37 817.80)">B</text><text transform="matrix(1.027 0 0 1 229.37 817.80)">u</text><text transform="matrix(0.917 0 0 1 242.62 817.80)">g</text><text transform="matrix(0.888 0 0 1 254.46 817.80)">s</text><text transform="matrix(0.827 0 0 1 270.37 817.80)">(</text><text transform="matrix(0.957 0 0 1 276.76 817.80)">2</text><text transform="matrix(0.827 0 0 1 289.11 817.80)">)</text></g>
<g fill="#111"><text transform="matrix(0.883 0 0 1 125.80 861.00)">A</text><text transform="matrix(1.026 0 0 1 139.47 861.00)">b</text><text transform="matrix(1.027 0 0 1 152.71 861.00)">h</text><text transform="matrix(1.060 0 0 1 165.96 861.00)">i</text><text transform="matrix(1.027 0 0 1 171.43 861.00)">n</text><text transform="matrix(0.931 0 0 1 184.68 861.00)">a</text><text transform="matrix(0.933 0 0 1 196.70 861.00)">v</text><text transform="matrix(0.827 0 0 1 213.13 861.00)">(</text><text transform="matrix(0.957 0 0 1 219.52 861.00)">2</text><text transform="matrix(0.957 0 0 1 231.87 861.00)">6</text><text transform="matrix(0.827 0 0 1 244.22 861.00)">)</text></g>
<g fill="#111"><text transform="matrix(0.776 0 0 1 152.80 904.20)">E</text><text transform="matrix(0.976 0 0 1 164.81 904.20)">x</text><text transform="matrix(1.026 0 0 1 176.13 904.20)">p</text><text x="189.37" y="904.20">o</text><text transform="matrix(1.120 0 0 1 202.49 904.20)">r</text><text transform="matrix(1.120 0 0 1 211.43 904.20)">t</text><text transform="matrix(0.827 0 0 1 224.47 904.20)">(</text><text transform="matrix(0.957 0 0 1 230.86 904.20)">1</text><text transform="matrix(0.957 0 0 1 243.21 904.20)">1</text><text transform="matrix(0.827 0 0 1 255.56 904.20)">)</text></g>
<g fill="#111"><text transform="matrix(1.060 0 0 1 152.80 947.40)">i</text><text transform="matrix(1.040 0 0 1 158.26 947.40)">m</text><text transform="matrix(1.026 0 0 1 178.36 947.40)">p</text><text x="191.59" y="947.40">o</text><text transform="matrix(1.120 0 0 1 204.72 947.40)">r</text><text transform="matrix(1.120 0 0 1 213.66 947.40)">t</text><text transform="matrix(0.939 0 0 1 221.08 947.40)">e</text><text transform="matrix(1.026 0 0 1 233.20 947.40)">d</text><text transform="matrix(0.827 0 0 1 252.05 947.40)">(</text><text transform="matrix(0.957 0 0 1 258.44 947.40)">1</text><text transform="matrix(0.957 0 0 1 270.79 947.40)">2</text><text transform="matrix(0.827 0 0 1 283.14 947.40)">)</text></g>
<g fill="#111"><text transform="matrix(0.843 0 0 1 152.80 990.60)">T</text><text transform="matrix(1.040 0 0 1 164.75 990.60)">m</text><text x="184.84" y="990.60">o</text><text transform="matrix(1.026 0 0 1 197.89 990.60)">b</text><text transform="matrix(1.060 0 0 1 211.12 990.60)">i</text><text transform="matrix(1.060 0 0 1 216.59 990.60)">l</text><text transform="matrix(0.939 0 0 1 222.05 990.60)">e</text><text transform="matrix(0.888 0 0 1 234.17 990.60)">s</text><text transform="matrix(0.827 0 0 1 250.08 990.60)">(</text><text transform="matrix(0.957 0 0 1 256.48 990.60)">3</text><text transform="matrix(0.827 0 0 1 268.83 990.60)">)</text></g>
<g fill="#111"><text transform="matrix(0.932 0 0 1 838.40 353.50)">O</text><text transform="matrix(1.026 0 0 1 855.22 353.50)">p</text><text transform="matrix(0.939 0 0 1 868.46 353.50)">e</text><text transform="matrix(1.027 0 0 1 880.58 353.50)">n</text><text transform="matrix(0.934 0 0 1 899.45 353.50)">I</text><text transform="matrix(1.027 0 0 1 905.47 353.50)">n</text><text transform="matrix(1.120 0 0 1 918.93 353.50)">t</text><text transform="matrix(0.939 0 0 1 926.35 353.50)">e</text><text transform="matrix(1.027 0 0 1 938.47 353.50)">n</text><text transform="matrix(1.120 0 0 1 951.93 353.50)">t</text></g>
<g fill="#111"><text transform="matrix(0.940 0 0 1 838.40 400.70)">D</text><text transform="matrix(1.060 0 0 1 854.15 400.70)">i</text><text transform="matrix(0.931 0 0 1 859.61 400.70)">a</text><text transform="matrix(0.917 0 0 1 871.62 400.70)">g</text><text transform="matrix(1.027 0 0 1 883.46 400.70)">n</text><text x="896.71" y="400.70">o</text><text transform="matrix(0.888 0 0 1 909.76 400.70)">s</text><text transform="matrix(1.060 0 0 1 920.06 400.70)">i</text><text transform="matrix(0.888 0 0 1 925.53 400.70)">s</text><text transform="matrix(0.843 0 0 1 941.44 400.70)">T</text><text transform="matrix(1.120 0 0 1 951.97 400.70)">r</text><text transform="matrix(0.939 0 0 1 960.71 400.70)">e</text><text transform="matrix(0.939 0 0 1 972.83 400.70)">e</text></g>
<g fill="#111"><text transform="matrix(0.797 0 0 1 838.40 466.50)">R</text><text transform="matrix(0.939 0 0 1 851.75 466.50)">e</text><text transform="matrix(1.027 0 0 1 863.87 466.50)">n</text><text transform="matrix(0.931 0 0 1 877.13 466.50)">a</text><text transform="matrix(1.040 0 0 1 889.14 466.50)">m</text><text transform="matrix(0.939 0 0 1 909.23 466.50)">e</text></g>
<g fill="#111"><text transform="matrix(0.776 0 0 1 838.40 514.00)">E</text><text transform="matrix(1.026 0 0 1 850.41 514.00)">d</text><text transform="matrix(1.060 0 0 1 863.65 514.00)">i</text><text transform="matrix(1.120 0 0 1 869.32 514.00)">t</text></g>
<g fill="#111"><text transform="matrix(0.940 0 0 1 838.40 561.20)">D</text><text transform="matrix(0.939 0 0 1 854.15 561.20)">e</text><text transform="matrix(1.060 0 0 1 866.26 561.20)">l</text><text transform="matrix(0.939 0 0 1 871.73 561.20)">e</text><text transform="matrix(1.120 0 0 1 884.05 561.20)">t</text><text transform="matrix(0.939 0 0 1 891.47 561.20)">e</text></g>
<g fill="#111"><text transform="matrix(0.813 0 0 1 838.40 626.50)">C</text><text x="852.03" y="626.50">o</text><text transform="matrix(1.026 0 0 1 865.07 626.50)">p</text><text transform="matrix(0.938 0 0 1 878.31 626.50)">y</text><text transform="matrix(0.840 0 0 1 894.80 626.50)">P</text><text transform="matrix(0.931 0 0 1 907.31 626.50)">a</text><text transform="matrix(1.120 0 0 1 919.52 626.50)">t</text><text transform="matrix(1.027 0 0 1 926.95 626.50)">h</text></g>
<g fill="#111"><text x="838.40" y="673.50">M</text><text x="857.90" y="673.50">o</text><text transform="matrix(0.933 0 0 1 870.95 673.50)">v</text><text transform="matrix(0.939 0 0 1 881.77 673.50)">e</text><text transform="matrix(0.843 0 0 1 899.50 673.50)">T</text><text x="909.95" y="673.50">o</text><text transform="matrix(0.892 0 0 1 922.99 673.50)">.</text><text transform="matrix(0.892 0 0 1 928.74 673.50)">.</text><text transform="matrix(0.892 0 0 1 934.49 673.50)">.</text></g>
<g fill="#111"><text transform="matrix(0.776 0 0 1 838.40 720.70)">E</text><text transform="matrix(0.976 0 0 1 850.41 720.70)">x</text><text transform="matrix(1.026 0 0 1 861.73 720.70)">p</text><text x="874.97" y="720.70">o</text><text transform="matrix(1.120 0 0 1 888.09 720.70)">r</text><text transform="matrix(1.120 0 0 1 897.03 720.70)">t</text></g>
<g fill="#111"><text transform="matrix(0.766 0 0 1 838.40 767.30)">S</text><text transform="matrix(0.931 0 0 1 850.25 767.30)">a</text><text transform="matrix(0.933 0 0 1 862.27 767.30)">v</text><text transform="matrix(0.939 0 0 1 873.09 767.30)">e</text><text transform="matrix(0.931 0 0 1 890.82 767.30)">a</text><text transform="matrix(0.888 0 0 1 902.83 767.30)">s</text></g>
<g fill="#111"><text transform="matrix(0.934 0 0 1 838.40 833.30)">I</text><text transform="matrix(1.027 0 0 1 844.42 833.30)">n</text><text transform="matrix(1.120 0 0 1 857.88 833.30)">t</text><text transform="matrix(0.939 0 0 1 865.31 833.30)">e</text><text transform="matrix(1.027 0 0 1 877.42 833.30)">n</text><text transform="matrix(1.120 0 0 1 890.88 833.30)">t</text><text transform="matrix(0.797 0 0 1 903.92 833.30)">R</text><text transform="matrix(0.939 0 0 1 917.27 833.30)">e</text><text transform="matrix(1.026 0 0 1 929.39 833.30)">p</text><text transform="matrix(1.060 0 0 1 942.62 833.30)">l</text><text transform="matrix(1.060 0 0 1 948.09 833.30)">i</text><text transform="matrix(0.886 0 0 1 953.55 833.30)">c</text><text transform="matrix(0.931 0 0 1 963.83 833.30)">a</text><text transform="matrix(1.120 0 0 1 976.05 833.30)">t</text><text transform="matrix(1.060 0 0 1 983.47 833.30)">i</text><text x="988.94" y="833.30">o</text><text transform="matrix(1.027 0 0 1 1001.98 833.30)">n</text><text transform="matrix(0.913 0 0 1 1020.85 833.30)">W</text><text transform="matrix(1.060 0 0 1 1040.85 833.30)">i</text><text transform="matrix(0.871 0 0 1 1046.31 833.30)">z</text><text transform="matrix(0.931 0 0 1 1056.41 833.30)">a</text><text transform="matrix(1.120 0 0 1 1068.51 833.30)">r</text><text transform="matrix(1.026 0 0 1 1077.24 833.30)">d</text></g>
<g fill="#111"><text transform="matrix(0.883 0 0 1 838.40 879.70)">A</text><text transform="matrix(1.027 0 0 1 852.07 879.70)">u</text><text transform="matrix(1.120 0 0 1 865.53 879.70)">t</text><text x="872.95" y="879.70">o</text><text transform="matrix(0.934 0 0 1 891.61 879.70)">I</text><text transform="matrix(1.027 0 0 1 897.63 879.70)">n</text><text transform="matrix(1.120 0 0 1 911.09 879.70)">t</text><text transform="matrix(0.939 0 0 1 918.51 879.70)">e</text><text transform="matrix(1.027 0 0 1 930.63 879.70)">n</text><text transform="matrix(1.120 0 0 1 944.09 879.70)">t</text><text transform="matrix(0.913 0 0 1 957.13 879.70)">W</text><text transform="matrix(1.060 0 0 1 977.12 879.70)">i</text><text transform="matrix(0.871 0 0 1 982.59 879.70)">z</text><text transform="matrix(0.931 0 0 1 992.69 879.70)">a</text><text transform="matrix(1.120 0 0 1 1004.79 879.70)">r</text><text transform="matrix(1.026 0 0 1 1013.52 879.70)">d</text></g>
</svg>
<div class="t g" style="left:31.6px;top:22.8px;letter-spacing:0.54px">Network Intent Manager</div>
<div class="t g" style="left:288.0px;top:22.8px;letter-spacing:-0.50px">&gt;</div>
<div class="t g" style="left:306.5px;top:22.8px;letter-spacing:0.41px">Standalone Intent</div>
<div class="t g" style="left:1004.9px;top:22.5px;letter-spacing:0.38px">Help</div>
<div class="t g" style="left:77.5px;top:89.3px;letter-spacing:0.29px">Filter</div>
<div class="t g" style="left:125.8px;top:140.6px;letter-spacing:0.28px">00 - Remediation Network Intent (13)</div>
<div class="t g" style="left:152.8px;top:183.8px;letter-spacing:-0.32px">Back Ups (4)</div>
<div class="t g" style="left:152.8px;top:227.0px;letter-spacing:0.15px">Diagnosis Intent (1)</div>
<div class="t g" style="left:152.8px;top:270.2px;letter-spacing:-0.20px">CVE Remediation</div>
<div class="t g" style="left:152.8px;top:313.4px;letter-spacing:0.04px">CVE Remediation (Non-urgent)</div>
<div class="t g" style="left:152.8px;top:356.6px;letter-spacing:0.12px">Err-Disabled Interface Check - Auto Remediate</div>
<div class="t g" style="left:152.8px;top:399.8px;letter-spacing:-0.28px">QoS Class (Voice) ACL (130) Auto Remediation [Cisco IOS]</div>
<div class="t g" style="left:152.8px;top:443.0px;letter-spacing:-0.25px">SNMP ACL (SNMP-ACL) Auto Remediation [Cisco Nexus]</div>
<div class="t g" style="left:152.8px;top:486.2px;letter-spacing:0.29px">Voice QoS Misconfiguration with Remediation</div>
<div class="t g" style="left:152.8px;top:529.4px;letter-spacing:-0.29px">VTY ACL (10) Auto Remediation [Cisco IOS]</div>
<div class="t g" style="left:152.8px;top:572.6px;letter-spacing:0.22px">WAN Link Auto Optimization-V2</div>
<div class="t g" style="left:125.8px;top:615.8px;letter-spacing:-0.71px">000AAA JIALI NI_NIT_AI_20260108_R12_3 (55)</div>
<div class="t g" style="left:152.8px;top:659.0px;letter-spacing:0.09px">for AI Runbook (32)</div>
<div class="t g" style="left:152.8px;top:702.2px;letter-spacing:-0.96px">NIT_JIALI (12)</div>
<div class="t g" style="left:152.8px;top:745.4px;letter-spacing:-0.75px">SNI_NIT NEW1 (9)</div>
<div class="t g" style="left:152.8px;top:788.6px;letter-spacing:-0.15px">Verify Bugs (2)</div>
<div class="t g" style="left:125.8px;top:831.8px;letter-spacing:0.01px">Abhinav (26)</div>
<div class="t g" style="left:152.8px;top:875.0px;letter-spacing:0.03px">Export (11)</div>
<div class="t g" style="left:152.8px;top:918.2px;letter-spacing:0.45px">imported (12)</div>
<div class="t g" style="left:152.8px;top:961.4px;letter-spacing:0.01px">Tmobiles (3)</div>
<div class="t g" style="left:838.4px;top:324.3px;letter-spacing:0.54px">Open Intent</div>
<div class="t g" style="left:838.4px;top:371.5px;letter-spacing:0.01px">Diagnosis Tree</div>
<div class="t g" style="left:838.4px;top:437.3px;letter-spacing:-0.03px">Rename</div>
<div class="t g" style="left:838.4px;top:484.8px;letter-spacing:0.11px">Edit</div>
<div class="t g" style="left:838.4px;top:532.0px;letter-spacing:0.27px">Delete</div>
<div class="t g" style="left:838.4px;top:597.3px;letter-spacing:-0.05px">Copy Path</div>
<div class="t g" style="left:838.4px;top:644.3px;letter-spacing:-0.06px">Move To...</div>
<div class="t g" style="left:838.4px;top:691.5px;letter-spacing:0.41px">Export</div>
<div class="t g" style="left:838.4px;top:738.1px;letter-spacing:-0.68px">Save as</div>
<div class="t g" style="left:838.4px;top:804.1px;letter-spacing:0.30px">Intent Replication Wizard</div>
<div class="t g" style="left:838.4px;top:850.5px;letter-spacing:0.41px">Auto Intent Wizard</div>
</body></html>
